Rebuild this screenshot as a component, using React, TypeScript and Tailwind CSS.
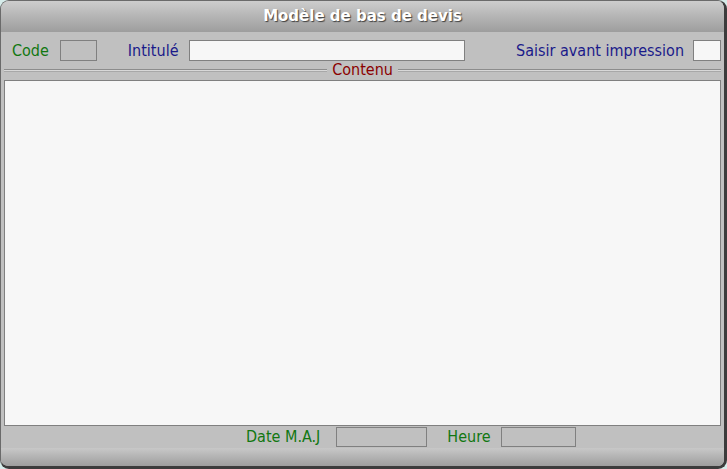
import React from "react";

export default function App() {
  const font = { fontFamily: '"DejaVu Sans Condensed", "DejaVu Sans", Verdana, sans-serif' } as React.CSSProperties;
  const title = { fontFamily: '"DejaVu Sans", Verdana, sans-serif' } as React.CSSProperties;
  return (
    <div className="w-[727px] h-[469px] bg-[#d6ecea]" style={font}>
      <div className="w-full h-full flex flex-col rounded-[9px] overflow-hidden border-t border-l border-[#6a6a6a] border-r-[3px] border-b-[3px] border-r-[#3c3c3c] border-b-[#3c3c3c] bg-[#c0c0c0]">
        <div className="h-[31px] shrink-0 flex items-center justify-center bg-gradient-to-b from-[#cdcdcd] to-[#9d9d9d]">
          <span
            className="text-white font-bold text-[15px] leading-none"
            style={{ ...title, textShadow: "1px 1px 1px #404040" }}
          >
            Modèle de bas de devis
          </span>
        </div>
        <div className="h-[33px] shrink-0 flex items-start text-[16px] leading-[21px] pl-[11px] pr-[3px] pt-[8px]">
          <span className="text-[#117711]">Code</span>
          <div className="ml-[11px] w-[37px] h-[21px] border border-[#808080] bg-[#c0c0c0]" />
          <span className="ml-[31px] text-[#1a1a8a]">Intitulé</span>
          <div className="ml-[10px] w-[276px] h-[21px] border border-[#808080] bg-[#f7f7f7]" />
          <span className="ml-auto text-[#1a1a8a]">Saisir avant impression</span>
          <div className="ml-[9px] w-[28px] h-[21px] border border-[#808080] bg-[#f7f7f7]" />
        </div>
        <div className="h-[10px] shrink-0 flex items-center px-[3px]">
          <div className="flex-1 h-[3px] border-t border-[#8c8c8c] bg-[#d8d8d8] border-b border-b-[#a8a8a8]" />
          <span className="px-[5px] text-[16px] leading-none text-[#8b0000]">Contenu</span>
          <div className="flex-1 h-[3px] border-t border-[#8c8c8c] bg-[#d8d8d8] border-b border-b-[#a8a8a8]" />
        </div>
        <div className="flex-1 mx-[3px] mt-[5px] border border-[#808080] bg-[#f7f7f7]" />
        <div className="h-[22px] shrink-0 flex items-center text-[16px] pl-[245px]">
          <span className="text-[#117711]">Date M.A.J</span>
          <div className="ml-[16px] w-[91px] h-[20px] border border-[#808080] bg-[#c0c0c0]" />
          <span className="ml-[20px] text-[#117711]">Heure</span>
          <div className="ml-[10px] w-[75px] h-[20px] border border-[#808080] bg-[#c0c0c0]" />
        </div>
        <div className="h-[18px] shrink-0 bg-gradient-to-b from-[#c8c8c8] to-[#9e9e9e]" />
      </div>
    </div>
  );
}
